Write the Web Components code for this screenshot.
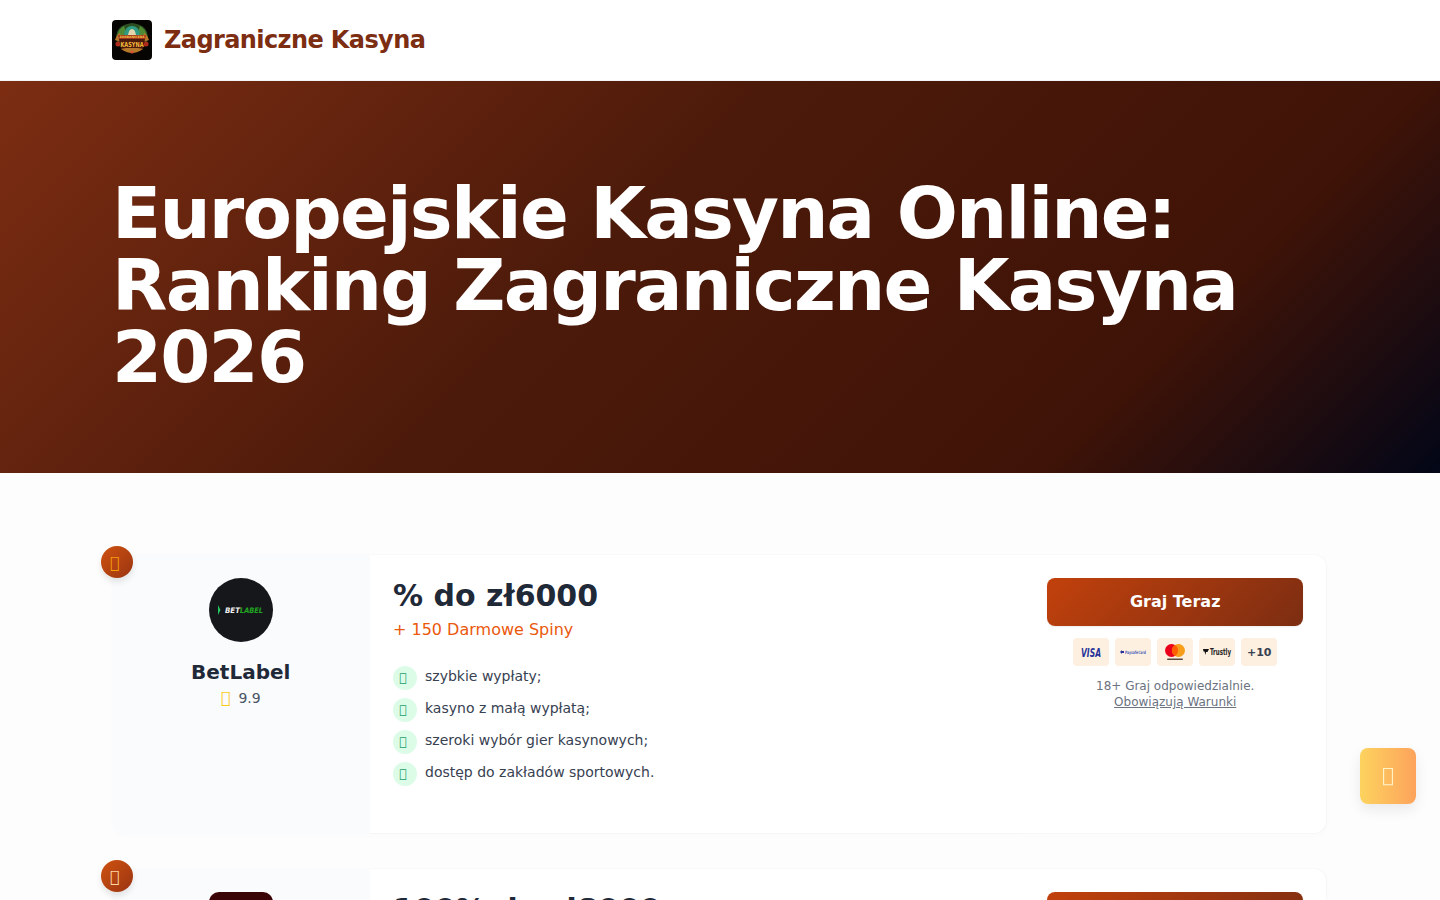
<!DOCTYPE html>
<html lang="pl"><head><meta charset="utf-8"><title>Zagraniczne Kasyna</title>
<style>
html,body{margin:0;padding:0;background:#fdfdfd;font-family:"DejaVu Sans",sans-serif;color:#1f2937;}
body{height:900px;overflow:hidden}
</style></head><body>
<site-header></site-header>
<hero-banner>Europejskie Kasyna Online: Ranking Zagraniczne Kasyna 2026</hero-banner>
<ranking-list>
  <casino-card name="BetLabel" rating="9.9" bonus="% do zł6000" spins="+ 150 Darmowe Spiny" logo="bet" medal="#f59e0b">
    <check-item>szybkie wypłaty;</check-item>
    <check-item>kasyno z małą wypłatą;</check-item>
    <check-item>szeroki wybór gier kasynowych;</check-item>
    <check-item>dostęp do zakładów sportowych.</check-item>
  </casino-card>
  <casino-card bonus="100% do zł8000" logo="dark" medal="#fed7aa"></casino-card>
</ranking-list>
<scroll-top></scroll-top>
<script>
function def(name, css, html){
  customElements.define(name, class extends HTMLElement{
    constructor(){super();this.attachShadow({mode:'open'});}
    connectedCallback(){
      this.shadowRoot.innerHTML='<style>'+css+'</style>'+(typeof html==='function'?html(this):html);
    }
  });
}
def('site-header',`
:host{display:block;background:#fff;height:81px;box-sizing:border-box;border-bottom:1px solid #f3f4f6}
.in{max-width:1216px;margin:0 auto;height:80px;display:flex;align-items:center;gap:12px}
.t{font-size:24px;font-weight:700;color:#7c2d12;line-height:32px;letter-spacing:-.6px}
svg{display:block;border-radius:4px;overflow:visible}
`,`<div class="in">
<svg width="40" height="40" viewBox="0 0 40 40"><rect width="40" height="40" rx="4" fill="#060504"/>
<path d="M4 20Q3 5 20 3Q37 5 36 20L32 27H8Z" fill="#2c4d20"/>
<path d="M5 16Q7 8 12 6L15 15ZM35 16Q33 8 28 6L25 15Z" fill="#4f8a34"/>
<path d="M12 15Q13 6 20 6Q27 6 28 15Z" fill="#2f9a84"/>
<path d="M16 15Q17 9 20 9Q23 9 24 15Z" fill="#e4d6ac"/>
<path d="M3 20Q5 14 8 13L10 22ZM37 20Q35 14 32 13L30 22Z" fill="#b9772a"/>
<circle cx="6" cy="24" r="2.500" fill="#b02a1a"/><circle cx="34" cy="24" r="2.500" fill="#b02a1a"/>
<path d="M6 15H34L33 19H7Z" fill="#a5351a"/>
<text x="7.500" y="18" font-family="DejaVu Sans" font-size="3" font-weight="700" fill="#f2c84a" textLength="25" lengthAdjust="spacingAndGlyphs">ZAGRANICZNE</text>
<path d="M7 19H33L31 29H9Z" fill="#4a1a0c"/>
<text x="8.500" y="26.800" font-family="DejaVu Sans" font-size="7" font-weight="700" fill="#f3b93a" textLength="23" lengthAdjust="spacingAndGlyphs">KASYNA</text>
<path d="M9 29Q20 37 31 29L26 28H14Z" fill="#b5782a"/><circle cx="20" cy="32" r="1.500" fill="#d9503a"/></svg>
<span class="t">Zagraniczne Kasyna</span></div>`);
def('hero-banner',`
:host{display:block;background:linear-gradient(135deg,#7c2d12 0%,#4c1a0a 42%,#3f1307 78%,#020617 100%);padding:96px 0;box-sizing:border-box;height:392px}
h1{margin:0 auto;max-width:1216px;font-size:72px;line-height:72px;font-weight:700;color:#fff;letter-spacing:-1.8px}
`,`<h1><slot></slot></h1>`);
def('ranking-list',`
:host{display:block;padding:81px 112.8px 0 112px}
.l{display:flex;flex-direction:column;gap:34px}
`,`<div class="l"><slot></slot></div>`);
def('check-item',`
:host{display:flex;gap:8px;height:32px;font-size:14px;line-height:20px;color:#374151}
.i{flex:none;width:24px;height:24px;border-radius:50%;background:#dcfce7;color:#22a06b;font-size:12px;display:flex;align-items:center;justify-content:center;padding-right:4px;box-sizing:border-box}
`,`<span class="i">\uf00c</span><span><slot></slot></span>`);
def('casino-card',`
:host{display:block;position:relative;background:#fff;border-radius:12px;box-shadow:0 2px 8px rgba(0,0,0,.012);height:280px}
.badge{position:absolute;z-index:1;left:-11px;top:-8px;width:32px;height:32px;border-radius:50%;background:linear-gradient(135deg,#cf5210,#9a3412);box-shadow:0 4px 6px rgba(0,0,0,.1);font-size:16px;display:flex;align-items:center;justify-content:center;padding-right:5px;box-sizing:border-box}
.g{display:grid;grid-template-columns:257.5px 1fr 304px;height:100%}
.side{background:#f9fbfd;border-radius:12px 0 0 12px;padding:24px;display:flex;flex-direction:column;align-items:center;box-sizing:border-box}
.logo{width:64px;height:64px;display:block}
.name{font-size:20px;font-weight:700;line-height:28px;margin-top:16px;color:#1f2937}
.rate{display:flex;gap:8px;align-items:center;font-size:14px;line-height:20px;color:#4b5563;margin-top:2px}
.rate i{font-style:normal;color:#facc15;font-size:16px;line-height:20px}
.mid{padding:24px 23.5px;box-shadow:inset 0 -1px #f4f5f6,inset 0 1px #f9f9fa}
.bonus{font-size:30px;font-weight:700;line-height:36px;color:#1f2937}
.spins{font-size:16px;line-height:24px;color:#ea580c;margin-top:4px;margin-bottom:24px}
.right{padding:24px;text-align:center;border-radius:0 12px 12px 0;box-shadow:inset -1px -1px #f7f7f8,inset -1px 1px #f9f9fa}
.btn{display:block;height:48px;line-height:48px;border-radius:8px;background:linear-gradient(135deg,#c2410c,#7c2d12);color:#fff;font-weight:700;font-size:16px;box-shadow:0 1px 2px rgba(0,0,0,.08)}
.pay{display:flex;justify-content:center;gap:6px;margin-top:12px}
.pay>span{width:36px;height:28px;border-radius:4px;background:#fef0e0;display:flex;align-items:center;justify-content:center;font-size:11px;font-weight:700;color:#374151}
.pay svg{overflow:visible;display:block}
.note{font-size:12px;line-height:16px;color:#6b7280;margin-top:12px}
.note u{display:block}
`,h=>{
const a=n=>h.getAttribute(n);
const logo=a('logo')==='bet'
?`<svg class="logo" viewBox="0 0 64 64"><circle cx="32" cy="32" r="32" fill="#15171a"/><path d="M9 27l2.500 5-2.500 5z" fill="#22c55e"/><text x="16" y="35" font-family="DejaVu Sans" font-size="7.500" font-weight="700" font-style="italic" fill="#f2f2f2" textLength="15" lengthAdjust="spacingAndGlyphs">BET</text><text x="31" y="35" font-family="DejaVu Sans" font-size="7.500" font-weight="700" font-style="italic" fill="#22a822" textLength="23" lengthAdjust="spacingAndGlyphs">LABEL</text></svg>`
:`<svg class="logo" viewBox="0 0 64 64"><rect width="64" height="64" rx="10" fill="#3b0508"/></svg>`;
const full=!!a('name');
return `<span class="badge" style="color:${a('medal')}">${'\uf091'}</span><div class="g">
<div class="side">${logo}${full?`<div class="name">${a('name')}</div><div class="rate"><i>\uf005</i><span>${a('rating')}</span></div>`:''}</div>
<div class="mid"><div class="bonus">${a('bonus')}</div>${full?`<div class="spins">${a('spins')}</div>`:''}<slot></slot></div>
<div class="right"><span class="btn">Graj Teraz</span>
${full?`<div class="pay">
<span><svg width="28" height="12" viewBox="0 0 28 12"><text x="14" y="10.500" text-anchor="middle" font-family="DejaVu Sans" font-size="12" font-weight="700" font-style="italic" fill="#26339a" textLength="20" lengthAdjust="spacingAndGlyphs">VISA</text></svg></span>
<span><svg width="30" height="8" viewBox="0 0 30 8"><path d="M2 4l2-2v1h2v2H4v1z" fill="#26339a"/><text x="7" y="6" font-family="DejaVu Sans" font-size="4.500" fill="#4a63b8" textLength="21" lengthAdjust="spacingAndGlyphs">PaysafeCard</text></svg></span>
<span><svg width="24" height="20" viewBox="0 0 24 20" style="margin-top:2px"><circle cx="8.500" cy="7.500" r="6.500" fill="#eb001b"/><circle cx="15.500" cy="7.500" r="6.500" fill="#f79e1b"/><path d="M12 2a6.500 6.500 0 0 1 0 11a6.500 6.500 0 0 1 0-11z" fill="#ff5f00"/><rect x="4" y="15.500" width="16" height="1.500" rx=".7" fill="#5a4a3e"/></svg></span>
<span><svg width="30" height="10" viewBox="0 0 30 10"><path d="M1 2h6L5.500 5H4L3.500 8 2.500 4.500H1.500z" fill="#111"/><text x="8" y="8" font-family="DejaVu Sans" font-size="8" font-weight="700" fill="#222" textLength="21" lengthAdjust="spacingAndGlyphs">Trustly</text></svg></span>
<span>+10</span></div>
<div class="note">18+ Graj odpowiedzialnie.<u>Obowiązują Warunki</u></div>`:''}</div>
</div>`;});
def('scroll-top',`
:host{position:fixed;right:24px;bottom:96px;width:56px;height:56px;border-radius:8px;background:linear-gradient(90deg,#fdd35e,#fda35c);box-shadow:0 6px 14px rgba(0,0,0,.08);display:flex;align-items:center;justify-content:center;color:#fef3c7;font-size:20px;padding-bottom:2px;box-sizing:border-box}
`,`\uf062`);
</script>
</body></html>
